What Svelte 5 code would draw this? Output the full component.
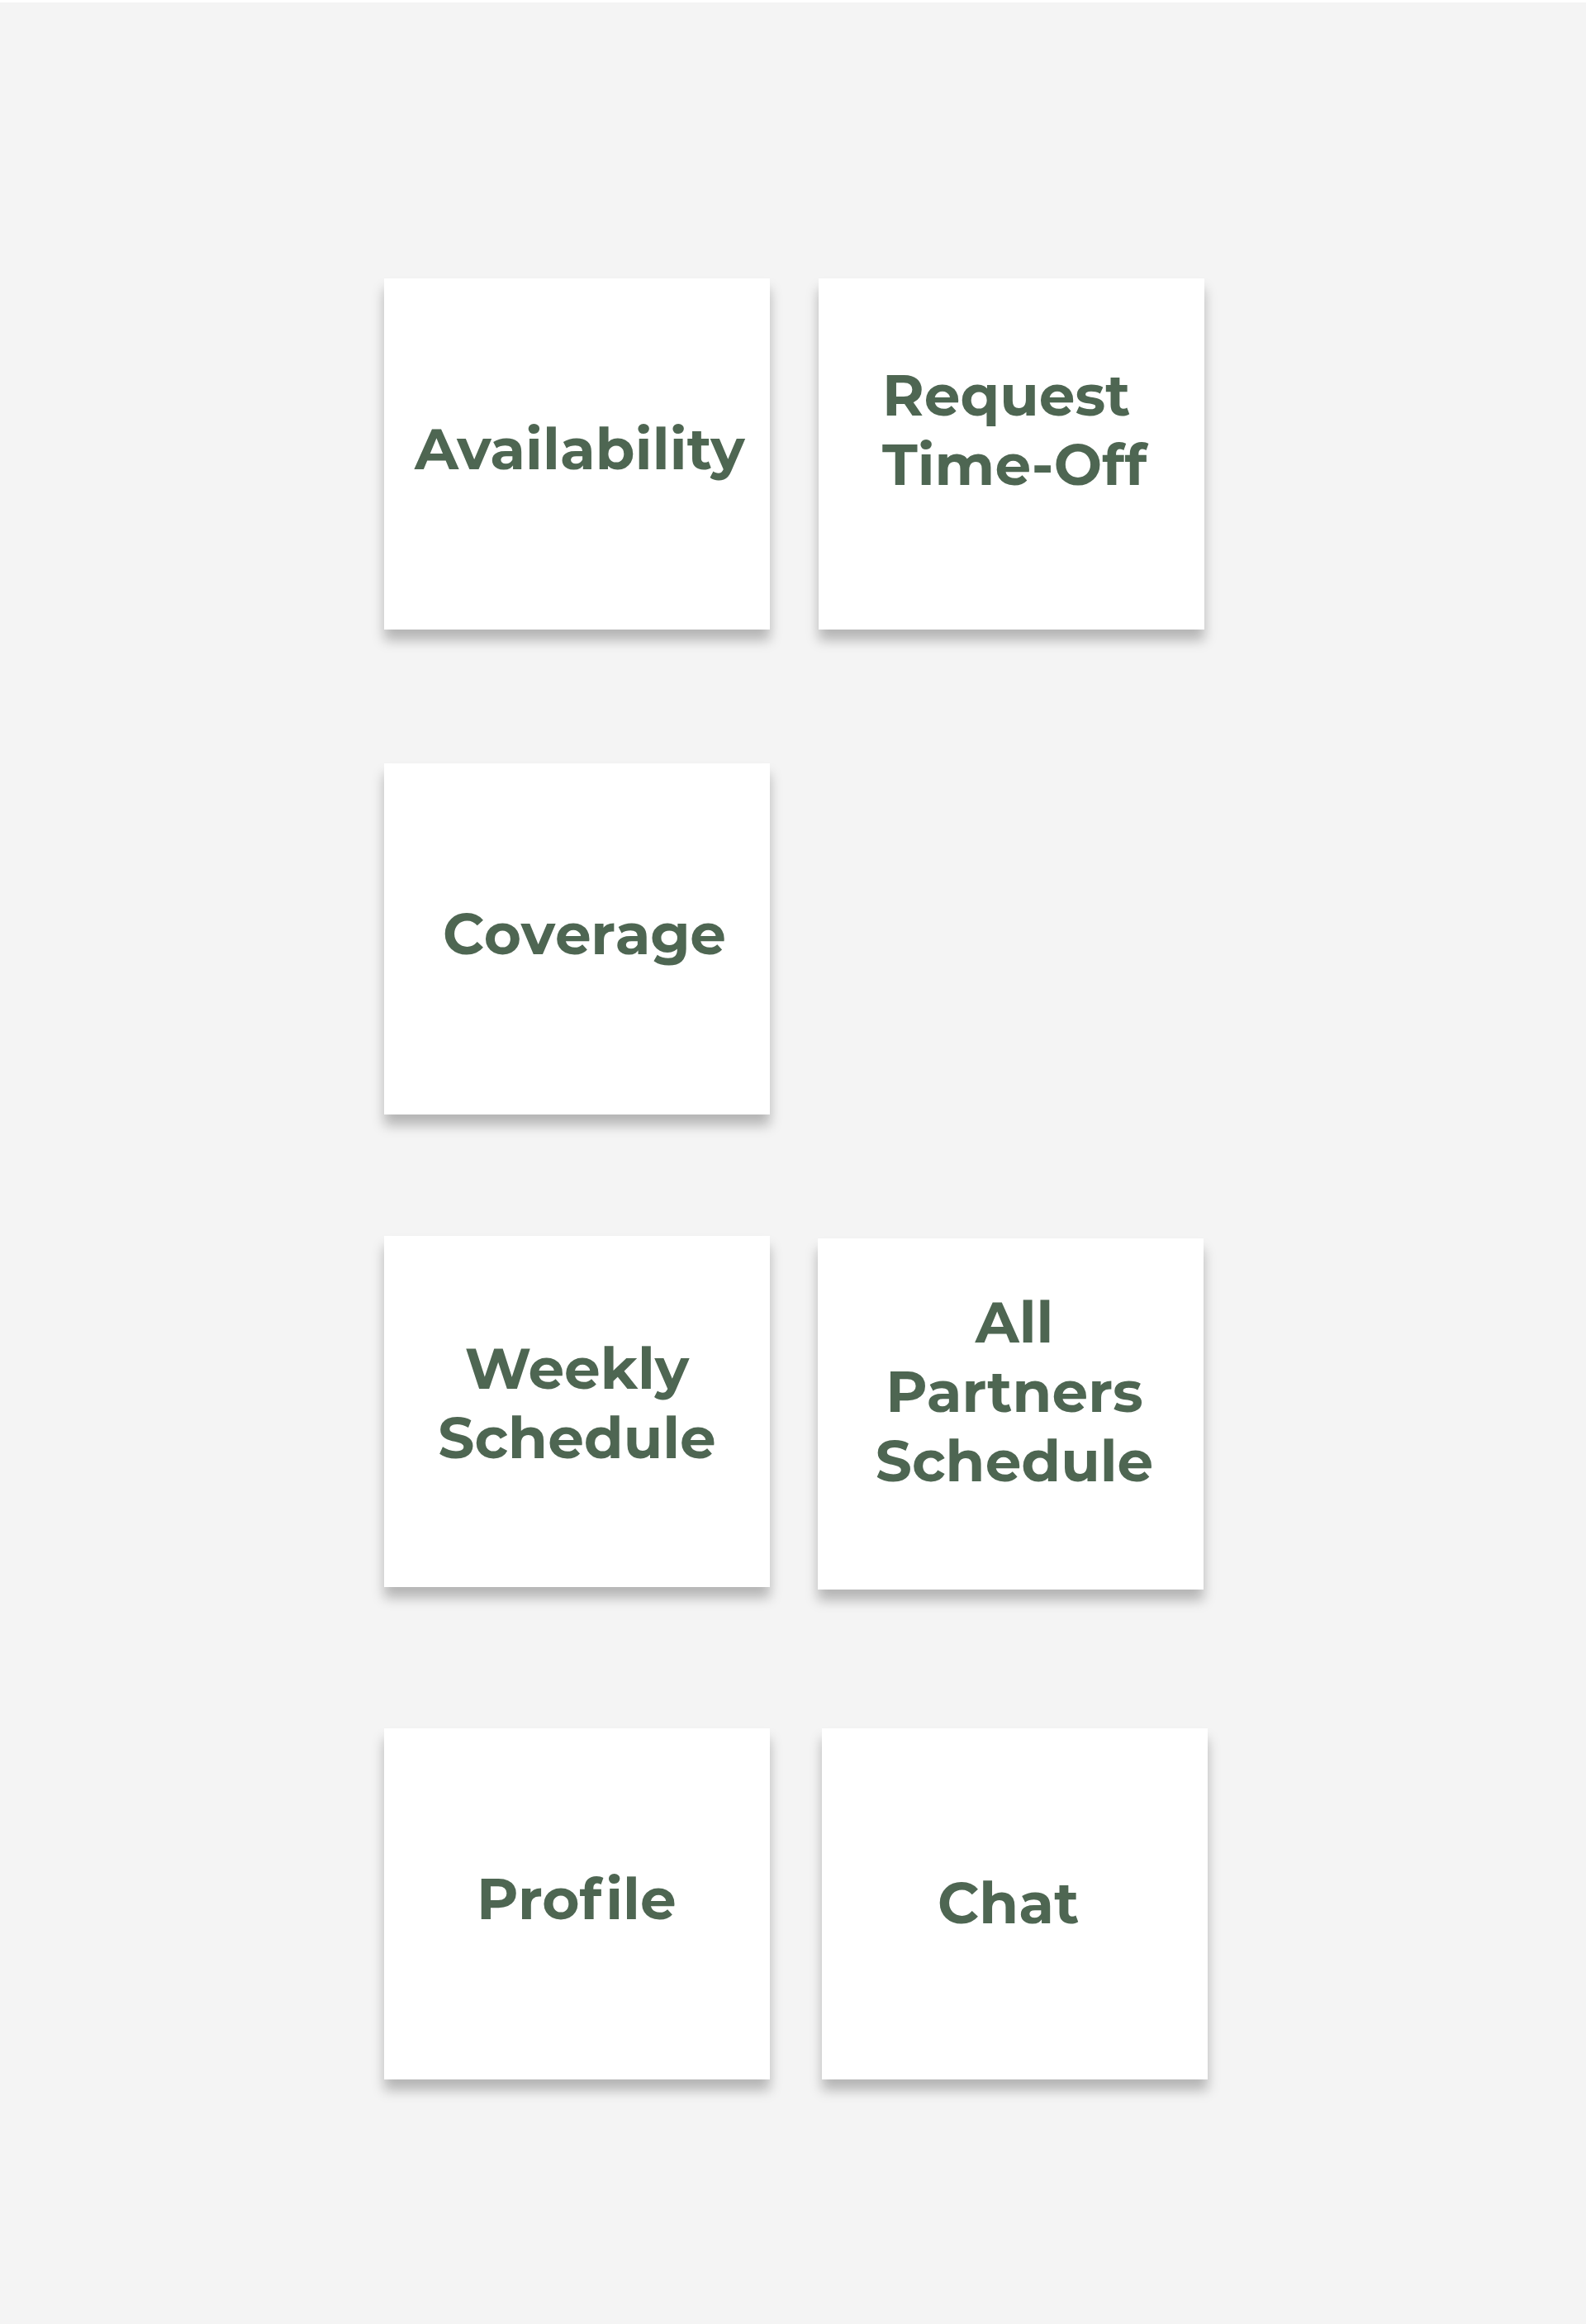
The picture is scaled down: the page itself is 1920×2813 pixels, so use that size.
<script lang="ts">
	interface Tile {
		id: string;
		lines: string[];
	}

	const sections: { id: string; tiles: Tile[] }[] = [
		{
			id: 'requests',
			tiles: [
				{ id: 'availability', lines: ['Availability'] },
				{ id: 'time-off', lines: ['Request', 'Time-Off'] }
			]
		},
		{
			id: 'shifts',
			tiles: [{ id: 'coverage', lines: ['Coverage'] }]
		},
		{
			id: 'schedules',
			tiles: [
				{ id: 'weekly', lines: ['Weekly', 'Schedule'] },
				{ id: 'partners', lines: ['All', 'Partners', 'Schedule'] }
			]
		},
		{
			id: 'account',
			tiles: [
				{ id: 'profile', lines: ['Profile'] },
				{ id: 'chat', lines: ['Chat'] }
			]
		}
	];

	// keeps the f and the i apart, they nearly touch in bold
	function splitPairs(line: string) {
		return line.split(/(?<=f)(?=i)/);
	}
</script>

<main class="menu">
	{#each sections as section (section.id)}
		<section class="row {section.id}">
			{#each section.tiles as tile (tile.id)}
				<div class="tile {tile.id}">
					{#each tile.lines as line}
						<div class="label">{#each splitPairs(line) as part}<span class="part">{part}</span>{/each}</div>
					{/each}
				</div>
			{/each}
		</section>
	{/each}
</main>

<style>
	:global(body) {
		margin: 0;
		background: #f4f4f4;
	}

	.menu {
		box-sizing: border-box;
		height: 2813px;
		padding: 334px 0 0 465px;
		border-top: 3px solid #fff;
		background: #f4f4f4;
		font-family: Montserrat, Inter, sans-serif;
	}

	.row {
		display: flex;
		align-items: flex-start;
		gap: 58px;
	}

	.requests {
		gap: 59px;
		margin-bottom: 162px;
	}

	.shifts {
		margin-bottom: 147px;
	}

	.schedules {
		margin-bottom: 168px;
	}

	.account {
		gap: 63px;
	}

	.tile {
		box-sizing: border-box;
		display: flex;
		flex-direction: column;
		width: 467px;
		height: 425px;
		background: #fff;
		box-shadow: 0 13px 14px rgba(0, 0, 0, 0.26);
	}

	.label {
		color: #4e6652;
		font-size: 69.2px;
		font-weight: 700;
		line-height: 84px;
		white-space: nowrap;
		font-variant-ligatures: none;
	}

	.part + .part {
		margin-left: 5px;
	}

	.availability {
		padding: 164px 0 0 37px;
		letter-spacing: 0.15px;
	}

	.time-off {
		padding: 99px 0 0 77px;
	}

	.coverage {
		padding: 164px 0 0 71px;
		font-kerning: none;
		letter-spacing: -0.3px;
	}

	.weekly {
		align-items: center;
		padding-top: 118px;
	}

	.partners {
		align-items: center;
		margin-top: 3px;
		padding: 59px 0 0 9px;
	}

	.profile {
		padding: 164px 0 0 112px;
	}

	.chat {
		padding: 169px 0 0 140px;
		letter-spacing: 0.2px;
	}
</style>
